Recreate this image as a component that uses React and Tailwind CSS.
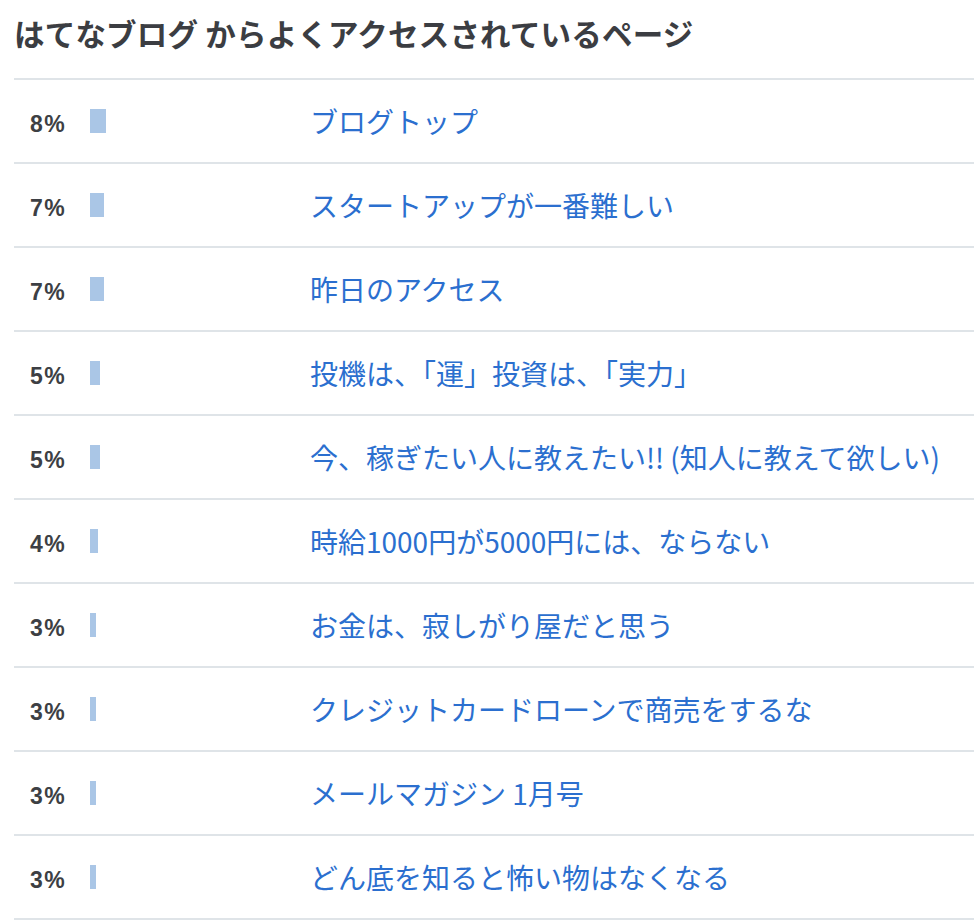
import React from 'react';

const pages = [
  { pct: 8, title: 'ブログトップ' },
  { pct: 7, title: 'スタートアップが一番難しい' },
  { pct: 7, title: '昨日のアクセス' },
  { pct: 5, title: '投機は、「運」投資は、「実力」' },
  { pct: 5, title: '今、稼ぎたい人に教えたい!! (知人に教えて欲しい)' },
  { pct: 4, title: '時給1000円が5000円には、ならない' },
  { pct: 3, title: 'お金は、寂しがり屋だと思う' },
  { pct: 3, title: 'クレジットカードローンで商売をするな' },
  { pct: 3, title: 'メールマガジン 1月号' },
  { pct: 3, title: 'どん底を知ると怖い物はなくなる' },
];

const App = () => {
  return (
    <div className="bg-white pl-[14px] font-['Noto_Sans_CJK_JP',sans-serif]">
      <h2 className="pt-[18px] pb-[30px] text-[30.5px] leading-[30px] font-bold text-[#3b3d42] tracking-[0.2px]">
        はてなブログ からよくアクセスされているページ
      </h2>

      <ul className="border-t-2 border-[#dfe4e8]">
        {pages.map((p, i) => (
          <li key={i} className="flex items-center h-[84px] border-b-2 border-[#dfe4e8]">
            <span className="w-[76px] pl-[16px] pt-[6px] font-['Liberation_Sans',sans-serif] text-[23px] tracking-[1.5px] font-bold text-[#3d3f44] leading-none">
              {p.pct}%
            </span>
            <span className="w-[220px] flex items-center">
              <span className="block h-[24px] bg-[#aac6e6]" style={{ width: p.pct * 2 }} />
            </span>
            <a href="#" className="text-[28px] text-[#2b6fcf] leading-none">
              {p.title}
            </a>
          </li>
        ))}
      </ul>
    </div>
  );
};

export default App;
